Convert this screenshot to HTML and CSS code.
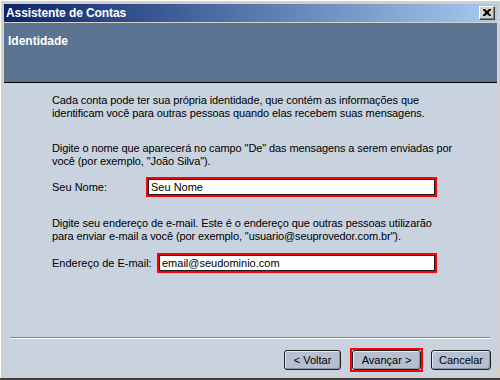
FILE: index.html
```html
<!DOCTYPE html>
<html lang="pt-BR">
<head>
<meta charset="utf-8">
<title>Assistente de Contas</title>
<link rel="stylesheet" href="styles.css">
</head>
<body>
<div class="window">
  <div class="titlebar">
    <span class="title">Assistente de Contas</span>
    <span class="close"><svg width="8" height="7" viewBox="0 0 8 7"><path d="M0 0h2l2 2 2-2h2v1l-2.5 2.5L8 6v1H6L4 5 2 7H0V6l2.5-2.5L0 1z" fill="#000"/></svg></span>
  </div>
  <div class="header"><span class="header-title">Identidade</span></div>
  <div class="content">
    <div class="form">
      <p class="para p1">Cada conta pode ter sua própria identidade, que contém as informações que<br>identificam você para outras pessoas quando elas recebem suas mensagens.</p>
      <p class="para p2">Digite o nome que aparecerá no campo "De" das mensagens a serem enviadas por<br>você (por exemplo, "João Silva").</p>
      <div class="row row1"><span class="label label-name">Seu Nome:</span><span class="field field-name">Seu Nome</span></div>
      <p class="para p3">Digite seu endereço de e-mail. Este é o endereço que outras pessoas utilizarão<br>para enviar e-mail a você (por exemplo, "usuario@seuprovedor.com.br").</p>
      <div class="row row2"><span class="label label-mail">Endereço de E-mail:</span><span class="field field-mail">email@seudominio.com</span></div>
    </div>
    <div class="footer">
      <div class="sep"></div>
      <div class="buttons">
        <span class="btn btn-back">&lt; Voltar</span>
        <span class="focus"><span class="btn btn-next">Avançar &gt;</span></span>
        <span class="btn btn-cancel">Cancelar</span>
      </div>
    </div>
  </div>
</div>
</body>
</html>
```

FILE: styles.css
```css
html, body {
  margin: 0;
  padding: 0;
}
body {
  width: 500px;
  height: 380px;
  overflow: hidden;
  font-family: "Liberation Sans", Arial, sans-serif;
  font-size: 11px;
  color: #000;
}
.window {
  width: 500px;
  height: 380px;
  box-sizing: border-box;
  padding: 4px 3px 2px 3px;
  background: #d4d0c8;
  border-bottom: 2px solid #404040;
  box-shadow: inset 1px 1px 0 #ffffff;
  display: flex;
  flex-direction: column;
}
.titlebar {
  height: 18px;
  margin-left: 1px;
  background: linear-gradient(to right, #0a246a, #a6caf0);
  display: flex;
  align-items: center;
  justify-content: space-between;
  padding: 0 2px 0 2px;
}
.title {
  color: #fff;
  font-weight: bold;
  font-size: 12px;
  letter-spacing: -0.1px;
  line-height: 18px;
}
.close {
  width: 16px;
  height: 14px;
  box-sizing: border-box;
  background: #d4d0c8;
  border-top: 1px solid #fff;
  border-left: 1px solid #fff;
  border-right: 1px solid #404040;
  border-bottom: 1px solid #404040;
  box-shadow: inset -1px -1px 0 #808080;
  display: flex;
  align-items: center;
  justify-content: center;
  padding: 0 1px 1px 0;
}
.header {
  margin-top: 1px;
  margin-left: 1px;
  background: #5a7491;
  border-bottom: 1px solid #000;
  padding: 12px 0 0 4px;
  box-sizing: border-box;
  height: 60px;
}
.header-title {
  color: #fff;
  font-weight: bold;
  font-size: 12px;
  line-height: 13px;
}
.content {
  flex: 1;
  background: #c8d3df;
  display: flex;
  flex-direction: column;
}
.form {
  padding: 11px 0 0 49px;
}
.para {
  margin: 0;
  line-height: 13px;
  letter-spacing: -0.1px;
  white-space: nowrap;
}
.p2 { margin-top: 22px; }
.p3 { margin-top: 20px; }
.row {
  display: flex;
  align-items: center;
  height: 20px;
}
.row1 { margin-top: 9px; }
.row2 { margin-top: 10px; }
.label-name { width: 94px; }
.label-mail { width: 105px; }
.field {
  box-sizing: border-box;
  height: 20px;
  background: #fff;
  border: 2px solid #ff0000;
  box-shadow: inset 0 0 0 1px #1a1a1a;
  padding: 0 3px;
  line-height: 16px;
}
.field-name { width: 291px; }
.field-mail { width: 280px; }
.footer {
  margin-top: auto;
  padding: 0 6px 4px 7px;
}
.sep {
  height: 1px;
  background: #7a8596;
  border-bottom: 1px solid #ffffff;
  margin-right: 1px;
}
.buttons {
  margin-top: 9px;
  display: flex;
  justify-content: flex-end;
  align-items: center;
}
.btn {
  box-sizing: border-box;
  height: 20px;
  display: flex;
  align-items: center;
  justify-content: center;
  background: #b5bfcf;
  border: 1px solid #202020;
  border-radius: 3px;
  box-shadow: inset 1px 1px 0 #e6eaf0, inset -1px -1px 0 #8a93a3;
  color: #000;
}
.btn-back { width: 57px; margin-right: 9px; }
.focus {
  border: 2px solid #ff0000;
  margin-right: 8px;
  display: flex;
}
.btn-next { width: 69px; }
.btn-cancel { width: 60px; }
```
